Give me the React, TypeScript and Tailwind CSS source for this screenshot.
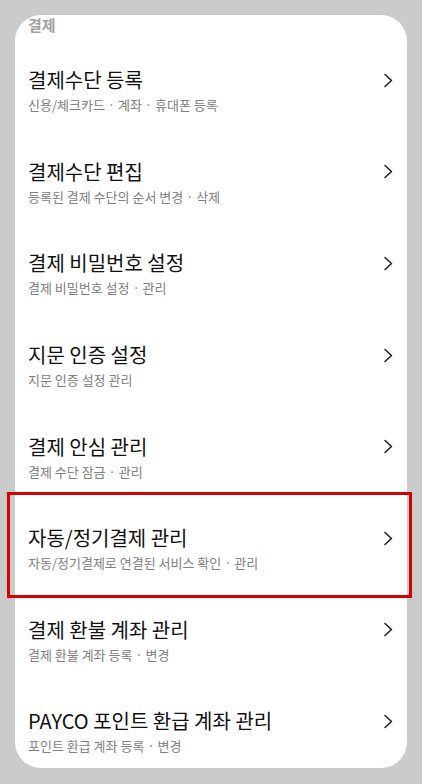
import React from "react";

const rows = [
  { t: "결제수단 등록", s: "신용/체크카드 · 계좌 · 휴대폰 등록" },
  { t: "결제수단 편집", s: "등록된 결제 수단의 순서 변경 · 삭제" },
  { t: "결제 비밀번호 설정", s: "결제 비밀번호 설정 · 관리" },
  { t: "지문 인증 설정", s: "지문 인증 설정 관리" },
  { t: "결제 안심 관리", s: "결제 수단 잠금 · 관리" },
  { t: "자동/정기결제 관리", s: "자동/정기결제로 연결된 서비스 확인 · 관리", hl: true },
  { t: "결제 환불 계좌 관리", s: "결제 환불 계좌 등록 · 변경" },
  { t: "PAYCO 포인트 환급 계좌 관리", s: "포인트 환급 계좌 등록 · 변경" },
];

function Chevron() {
  return (
    <svg width="10" height="15" viewBox="0 0 10 15" className="shrink-0">
      <path d="M2 1.5 L8.5 7.5 L2 13.5" fill="none" stroke="#222" strokeWidth="1.6" strokeLinecap="round" strokeLinejoin="round" />
    </svg>
  );
}

export default function App() {
  return (
    <div
      className="relative h-[784px] w-[422px] overflow-hidden bg-[#cbcbcb] px-[15px] pt-[15px]"
      style={{ fontFamily: '"Noto Sans CJK KR", "Noto Sans", sans-serif' }}
    >
      <div className="h-[753px] overflow-hidden rounded-[26px] bg-white">
        <div className="h-[30px] pl-[13px]">
          <div className="text-[15px] font-bold leading-[20px] text-[#a0a0a0]">결제</div>
        </div>
        {rows.map((r) => (
          <div key={r.t} className="flex h-[91.6px] flex-col justify-center pl-[13px] pr-[14px]">
            <div className="flex h-[26px] items-center justify-between">
              <div className="text-[20px] font-normal leading-[26px] text-[#111111]">{r.t}</div>
              <Chevron />
            </div>
            <div className="mt-[3px] text-[13px] leading-[18px] text-[#808080]">{r.s}</div>
          </div>
        ))}
      </div>
      <div className="pointer-events-none absolute left-[7px] top-[492px] h-[106px] w-[405px] border-[3px] border-[#d60000]" />
    </div>
  );
}
